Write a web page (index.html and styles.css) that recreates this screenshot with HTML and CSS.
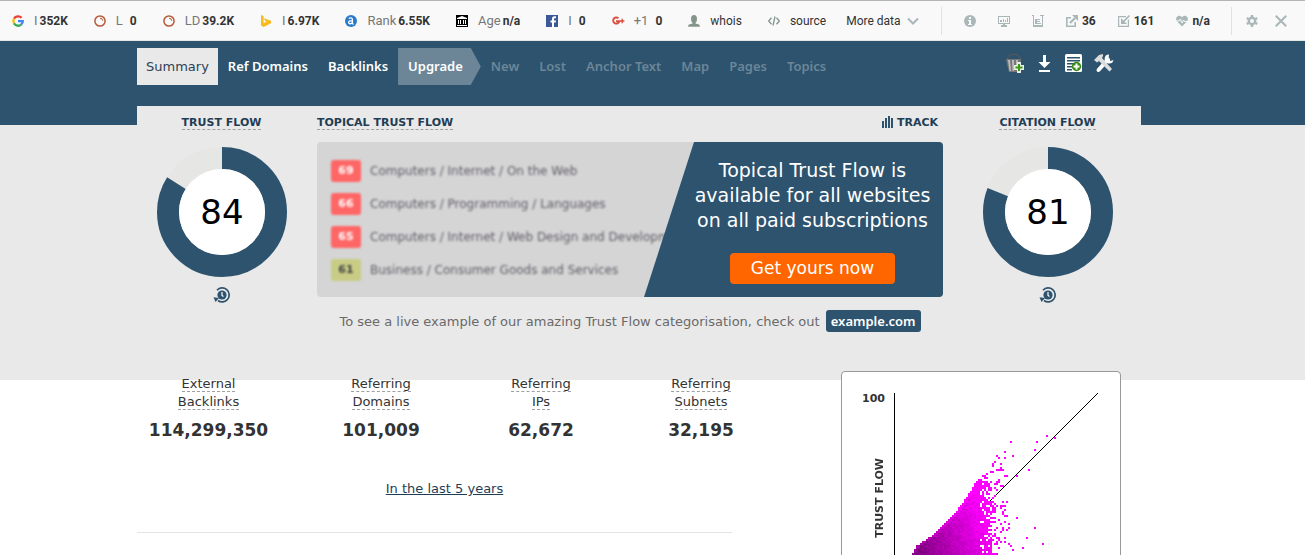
FILE: index.html
```
<!DOCTYPE html>
<html lang="en">
<head>
    <meta charset="UTF-8">
    <meta name="viewport" content="width=device-width, initial-scale=1.0">
    <title>Site Explorer</title>
    <link rel="stylesheet" href="styles.css">
</head>
<body>
    <div class="toolbar">
        <a class="tool" href="#">
            <svg class="ico" viewBox="0 0 12 12" fill="none" stroke-width="2.3"><path d="M9.6 2.8A4.8 4.8 0 0 0 2 3.6" stroke="#ea4335"/><path d="M2 3.6a4.8 4.8 0 0 0 0 4.8" stroke="#fbbc05"/><path d="M2 8.4a4.8 4.8 0 0 0 7.2 1.2" stroke="#34a853"/><path d="M9.2 9.6a4.8 4.8 0 0 0 1.6-3.5H6" stroke="#4285f4"/></svg>
            <span class="label">I</span><b>352K</b>
        </a>
        <a class="tool zero" href="#">
            <svg class="ico" viewBox="0 0 12 12" fill="none" stroke="#b85a3a"><circle cx="6" cy="6" r="5.1" stroke-width="1.5"/><path d="M6 3.2a2.8 2.8 0 0 1 2.8 2.6" stroke-width="1"/></svg>
            <span class="label">L</span><b>0</b>
        </a>
        <a class="tool" href="#">
            <svg class="ico" viewBox="0 0 12 12" fill="none" stroke="#b85a3a"><circle cx="6" cy="6" r="5.1" stroke-width="1.5"/><path d="M6 3.2a2.8 2.8 0 0 1 2.8 2.6" stroke-width="1"/></svg>
            <span class="label">LD</span><b>39.2K</b>
        </a>
        <a class="tool" href="#">
            <svg class="ico" viewBox="0 0 12 12" fill="#f9ba1c"><path d="M1 0l2.6 1v7.3l3-1.8-1.6-.8-1-2.4 7 2.4v2.6L3.600 12 1 10.500z"/></svg>
            <span class="label">I</span><b>6.97K</b>
        </a>
        <a class="tool" href="#">
            <svg class="ico" viewBox="0 0 12 12"><circle cx="6" cy="6" r="6" fill="#2b7ac9"/><path d="M3.800 3.600C5 2.500 7.400 2.400 7.400 4.400v3.800c0 .8.500.9 1.200.7M7.400 5.600C5.200 5.500 3.500 6 3.600 7.500c.2 1.800 3 1.600 3.800-.1" fill="none" stroke="#fff" stroke-width="1.300"/></svg>
            <span class="label">Rank</span><b>6.55K</b>
        </a>
        <a class="tool" href="#">
            <svg class="ico" viewBox="0 0 12 12"><path fill="#000" d="M0 0h12v12H0z"/><path fill="#fff" d="M1 3l5-2 5 2v1H1zM2 5h1v4H2zM4 5h1v4H4zM7 5h1v4H7zM9 5h1v4H9zM1 10h10v1H1z"/></svg>
            <span class="label">Age</span><b>n/a</b>
        </a>
        <a class="tool zero" href="#">
            <svg class="ico" viewBox="0 0 12 12"><path fill="#3b5998" d="M0 0h12v12H0z"/><path fill="#fff" d="M6 12V7.500H4.500v-2H6V4c0-2 1.200-2.700 2.500-2.700H10v1.900H9c-.8 0-1 .3-1 .9v1.400h2l-.3 2H8V12z"/></svg>
            <span class="label">I</span><b>0</b>
        </a>
        <a class="tool zero" href="#">
            <svg class="ico" viewBox="0 0 12 12" fill="none" stroke="#dc4e41"><path d="M6.400 3.300a3.100 3.100 0 1 0 .9 2.900H4" stroke-width="1.900"/><path d="M10.200 3.800v4.400M8 6h4.400" stroke-width="1.400"/></svg>
            <span class="label">+1</span><b>0</b>
        </a>
        <a class="tool" href="#">
            <svg class="ico" viewBox="0 0 12 12" fill="#84958c"><ellipse cx="6" cy="4" rx="3" ry="3.900"/><path d="M4.500 6h3v2.500l3.500 1c.6.3.8 1 .8 2.200H.2c0-1.200.2-1.900.8-2.200l3.500-1z"/></svg>
            <span>whois</span>
        </a>
        <a class="tool" href="#">
            <svg class="ico" viewBox="0 0 12 12" fill="none" stroke="#84958c" stroke-width="1.300"><path d="M3.500 2.800L.7 6l2.800 3.200M8.500 2.800L11.300 6 8.500 9.200M7 1.500L5 10.500"/></svg>
            <span>source</span>
        </a>
        <button class="more" type="button">More data
            <svg class="ico" viewBox="0 0 12 12" fill="none" stroke="#a9b7b8" stroke-width="2"><path d="M1 3.500l5 5 5-5"/></svg>
        </button>
        <div class="page-tools">
            <button type="button" aria-label="Info"><svg class="ico" viewBox="0 0 12 12"><circle cx="6" cy="6" r="6" fill="#a9b7b8"/><path fill="#f9f9f9" d="M5 2h2v2H5zM4 5h3v4h1v1H4V9h1V6H4z"/></svg></button>
            <button type="button" aria-label="Diagnosis"><svg class="ico" viewBox="0 0 12 12" fill="#a9b7b8"><path d="M0 1h12v8H0zM1 2v6h10V2z" fill-rule="evenodd"/><path d="M2 5h2v2H2zM5 4h1v3H5zM7 5h1v2H7zM9 3h1v4H9zM5 9h2v1h2v2H3v-2h2z"/></svg></button>
            <button type="button" aria-label="Density"><svg class="ico" viewBox="0 0 12 12" fill="#a9b7b8"><path d="M0 0h2v10h8V1H8V0h4v1h-1v11H1V1H0z"/><path d="M3 4h5v1H5v1h3v1H5v1h4v1H3z"/></svg></button>
            <a class="links" href="#"><svg class="ico" viewBox="0 0 12 12" fill="none" stroke="#a9b7b8" stroke-width="1.600"><path d="M5 2.800H.8v8.400h8.400V7"/><path d="M4 8l5-5" stroke-width="2"/><path d="M6 0h6v6z" fill="#a9b7b8" stroke="none"/></svg><b>36</b></a>
            <a class="links" href="#"><svg class="ico" viewBox="0 0 12 12" fill="none" stroke="#a9b7b8" stroke-width="1.200"><path d="M8 1.600H.6v9.800h9.800V4.500"/><path d="M11.500.5L5 7" stroke-width="1.700"/><path d="M3 3v6h6z" fill="#a9b7b8" stroke="none"/></svg><b>161</b></a>
            <a class="links" href="#"><svg class="ico" viewBox="0 0 12 12"><path fill="#a9b7b8" d="M6 11.500L.8 6.300C-1 3.500 1 .8 3.200.8 4.600.8 5.500 1.500 6 2.500 6.500 1.500 7.400.8 8.800.8 11 .8 13 3.500 11.200 6.300z"/><path d="M0 6h3l1.200-2L6 8l1.500-3 1 1.500H12" fill="none" stroke="#f9f9f9" stroke-width="1"/></svg><b>n/a</b></a>
        </div>
        <div class="window-tools">
            <button type="button" aria-label="Settings"><svg class="ico" viewBox="0 0 12 12" fill="none" stroke="#a9b7b8"><circle cx="6" cy="6" r="3.200" stroke-width="2.400"/><path d="M6 0v2M6 10v2M.8 3l1.700 1M9.500 8l1.700 1M.8 9l1.700-1M9.500 4l1.700-1" stroke-width="2.400"/></svg></button>
            <button type="button" aria-label="Close"><svg class="ico" viewBox="0 0 12 12" fill="none" stroke="#a9b7b8" stroke-width="2"><path d="M.8.8l10.400 10.400M11.200.8L.8 11.200"/></svg></button>
        </div>
    </div>

    <header class="header">
        <div class="container header-row">
            <nav class="tabs">
                <a class="current" href="#">Summary</a>
                <a href="#">Ref Domains</a>
                <a href="#">Backlinks</a>
                <a class="upgrade" href="#">Upgrade</a>
                <a class="locked" href="#">New</a>
                <a class="locked" href="#">Lost</a>
                <a class="locked" href="#">Anchor Text</a>
                <a class="locked" href="#">Map</a>
                <a class="locked" href="#">Pages</a>
                <a class="locked" href="#">Topics</a>
            </nav>
            <div class="actions">
                <button type="button" aria-label="Add to bucket">
                    <svg viewBox="0 0 20 20"><path d="M3 7C4-.5 16-.5 17 7" fill="none" stroke="#54585c" stroke-width="1.200"/><path fill="#777" d="M2 6h15l-2 13H5z"/><path fill="#bbb" d="M4 7h2l1 11H5.500zM8 7h2v11H8.500zM12 7h2l-1 8h-1z"/><path fill="#e8eee4" d="M10 12h3V9h4v3h3v5h-3v3h-4v-3h-3z"/><path fill="#3b9a14" d="M11.500 13.500H14V11h2v2.500h2.500v2H16V18h-2v-2.500h-2.500z"/></svg>
                </button>
                <button type="button" aria-label="Download">
                    <svg viewBox="0 0 20 20" fill="#fff"><path d="M9 2h3v7h4.500l-6 6-6-6H9zM5 17h11v2H5z"/></svg>
                </button>
                <button type="button" aria-label="Create report">
                    <svg viewBox="0 0 20 20"><rect x="1" y="1" width="17" height="18" rx="1.500" fill="#fff"/><path fill="#2d536e" d="M3 4h13v1.500H3zM3 7h13v1.500H3zM3 10h8v1.500H3zM3 13h5v1.500H3zM3 16h5v1.500H3z"/><circle cx="12.500" cy="13.500" r="4.700" fill="#3b8a14"/><path fill="#fff" d="M9.500 12.500h2v-2h2v2h2v2h-2v2h-2v-2h-2z"/></svg>
                </button>
                <button type="button" aria-label="Tools">
                    <svg viewBox="0 0 20 20"><path d="M15 1.500a4.500 4.500 0 1 0 4.500 5.500l-3 1-2-2z" fill="#fff"/><path d="M14 6.500L4.500 17" stroke="#fff" stroke-width="4" stroke-linecap="round"/><path fill="#ddd" d="M0 7l5-5 4-1v2L8 5l10 11-2.500 2.500L5 8 3 9.500z"/></svg>
                </button>
            </div>
        </div>
    </header>

    <section class="flow">
        <div class="container flow-grid">
            <div class="metric">
                <h2><a href="#">TRUST FLOW</a></h2>
                <svg class="ring" viewBox="0 0 130 130"><circle class="track-bg" cx="65" cy="65" r="54"/><circle class="track-on" cx="65" cy="65" r="54" pathLength="100" stroke-dasharray="84 100"/><circle cx="65" cy="65" r="43" fill="#fff"/><text x="65" y="77">84</text></svg>
                <button class="history" type="button" aria-label="Trust Flow history"><svg viewBox="0 0 16 16"><path d="M3 3.200a7 7 0 1 1 1 10.300" fill="none" stroke="#2d536e" stroke-width="1.700"/><circle cx="8" cy="8" r="4.600" fill="#2d536e"/><path d="M8 5v3.500l1.500 1" fill="none" stroke="#fff" stroke-width="1.200"/><path d="M-.5 10.200l5.500.8-3.500 4z" fill="#2d536e"/></svg></button>
            </div>

            <div class="topical">
                <div class="topical-head">
                    <h2><a href="#">TOPICAL TRUST FLOW</a></h2>
                    <button class="track" type="button"><svg viewBox="0 0 11 12" fill="#2d536e"><path d="M0 5h2v7H0zM3 2h2v10H3zM6 0h2v12H6zM9 2h2v10H9z"/></svg>TRACK</button>
                </div>
                <div class="promo">
                    <ul class="topics">
                        <li><b>69</b>Computers / Internet / On the Web</li>
                        <li><b>66</b>Computers / Programming / Languages</li>
                        <li><b>65</b>Computers / Internet / Web Design and Development</li>
                        <li><b class="green">61</b>Business / Consumer Goods and Services</li>
                    </ul>
                    <div class="offer">
                        <p>Topical Trust Flow is<br>available for all websites<br>on all paid subscriptions</p>
                        <a class="get" href="#">Get yours now</a>
                    </div>
                </div>
                <p class="live">To see a live example of our amazing Trust Flow categorisation, check out <a href="#">example.com</a></p>
            </div>

            <div class="metric">
                <h2><a href="#">CITATION FLOW</a></h2>
                <svg class="ring" viewBox="0 0 130 130"><circle class="track-bg" cx="65" cy="65" r="54"/><circle class="track-on" cx="65" cy="65" r="54" pathLength="100" stroke-dasharray="81 100"/><circle cx="65" cy="65" r="43" fill="#fff"/><text x="65" y="77">81</text></svg>
                <button class="history" type="button" aria-label="Citation Flow history"><svg viewBox="0 0 16 16"><path d="M3 3.200a7 7 0 1 1 1 10.300" fill="none" stroke="#2d536e" stroke-width="1.700"/><circle cx="8" cy="8" r="4.600" fill="#2d536e"/><path d="M8 5v3.500l1.500 1" fill="none" stroke="#fff" stroke-width="1.200"/><path d="M-.5 10.200l5.500.8-3.500 4z" fill="#2d536e"/></svg></button>
            </div>
        </div>
    </section>

    <main class="container main">
        <div class="totals">
            <dl class="stats">
                <div><dt><a href="#">External<br>Backlinks</a></dt><dd>114,299,350</dd></div>
                <div><dt><a href="#">Referring<br>Domains</a></dt><dd>101,009</dd></div>
                <div><dt><a href="#">Referring<br>IPs</a></dt><dd>62,672</dd></div>
                <div><dt><a href="#">Referring<br>Subnets</a></dt><dd>32,195</dd></div>
            </dl>
            <a class="years" href="#">In the last 5 years</a>
        </div>
        <div class="chart">
            <span class="max">100</span>
            <span class="axis">TRUST FLOW</span>
            <canvas id="plot" width="206" height="206"></canvas>
        </div>
    </main>
<script src="script.js"></script>
</body>
</html>
```
FILE: styles.css
```
html,
body {
    height: 100%;
    margin: 0;
    padding: 0;
}

body {
    overflow: hidden;
    background: #fff;
    color: #333;
    font: 13px/18px Verdana, 'DejaVu Sans', sans-serif;
}

a {
    color: inherit;
    text-decoration: none;
}

button {
    border: 0;
    padding: 0;
    background: transparent;
    color: inherit;
    font: inherit;
    cursor: pointer;
}

svg {
    display: block;
    flex: none;
    overflow: visible;
}

h2,
p,
ul,
dl,
dd {
    margin: 0;
    padding: 0;
}

.container {
    max-width: 1004px;
    margin: 0 auto;
}

/* toolbar */
.toolbar {
    display: flex;
    align-items: center;
    box-sizing: border-box;
    height: 41px;
    padding: 0 18px 0 12px;
    border-top: 1px solid #b4b4b4;
    border-bottom: 1px solid #e4e8e4;
    background: #f9f9f9;
    font: 12px/16px Roboto, sans-serif;
    white-space: nowrap;
}

.ico {
    width: 12px;
    height: 12px;
}

.tool {
    display: flex;
    align-items: center;
    margin-right: 26px;
}

.tool .ico {
    margin-right: 10px;
}

.tool .label {
    margin-right: 2px;
    color: #777;
    font-size: 13px;
}

.tool.zero .label {
    margin-right: 7px;
}

.more {
    display: flex;
    align-items: center;
    gap: 6px;
    margin-left: -6px;
}

.page-tools,
.window-tools {
    display: flex;
    align-items: center;
    height: 28px;
    border-left: 1px solid #dfe3e3;
}

.page-tools {
    gap: 22px;
    margin-left: auto;
    padding: 0 21px 0 22px;
}

.links {
    display: flex;
    align-items: center;
    gap: 4px;
}

.window-tools {
    gap: 17px;
    padding-left: 14px;
}

/* header */
.header {
    padding: 7px 27px 40px 0;
    background: #2d536e;
}

.header-row {
    display: flex;
    justify-content: space-between;
}

.tabs {
    display: flex;
    color: #fff;
    font: 600 13px/37px 'Noto Sans', sans-serif;
}

.tabs a {
    padding: 0 10px;
}

.tabs .current {
    background: #e9e9e9;
    color: #2d4254;
    font: 13px/37px Verdana, 'DejaVu Sans', sans-serif;
    padding: 0 9px;
}

.tabs .upgrade {
    padding: 0 18px 0 10px;
    background: #6c8698;
    clip-path: polygon(0 0, calc(100% - 10px) 0, 100% 50%, calc(100% - 10px) 100%, 0 100%);
}

.tabs .locked {
    color: #6c8698;
}

.actions {
    display: flex;
    gap: 10px;
    margin: 5px 27px 0 0;
}

.actions svg {
    width: 20px;
    height: 20px;
}

.actions button {
    align-self: flex-start;
}

/* flow metrics */
.flow {
    padding-right: 27px;
    background: #e9e9e9;
}

.flow-grid {
    position: relative;
    top: -19px;
    display: grid;
    grid-template-columns: 169px 1fr 187px;
    column-gap: 11px;
    box-sizing: border-box;
    height: 255px;
    padding-top: 10px;
    background: #e9e9e9;
}

h2,
.track {
    color: #1f3d55;
    font-size: 11px;
    font-weight: bold;
    line-height: 13px;
}

h2 a {
    border-bottom: 1px dashed #a0a0a0;
}

.metric {
    display: flex;
    flex-direction: column;
    align-items: center;
}

.ring {
    width: 130px;
    height: 130px;
    margin: 18px 0 10px;
}

.ring text {
    fill: #000;
    font-size: 34px;
    text-anchor: middle;
}

.track-bg,
.track-on {
    fill: none;
    stroke: #e6e6e4;
    stroke-width: 22;
}

.track-on {
    stroke: #2d536e;
    transform: rotate(-90deg);
    transform-origin: center;
}

.history svg {
    width: 16px;
    height: 16px;
}

.topical-head {
    display: flex;
    justify-content: space-between;
    padding-right: 5px;
}

.track {
    display: flex;
    gap: 4px;
}

.track svg {
    width: 11px;
    height: 12px;
}

.promo {
    display: flex;
    justify-content: space-between;
    box-sizing: border-box;
    height: 155px;
    margin-top: 13px;
    border-radius: 4px;
    overflow: hidden;
    background: #d5d5d5;
}

.topics {
    display: flex;
    flex: 1;
    flex-direction: column;
    gap: 11px;
    min-width: 0;
    margin-right: -50px;
    padding: 18px 0 0 14px;
    color: #605c66;
    font-size: 12px;
    list-style: none;
    white-space: nowrap;
    filter: blur(1px);
}

.topics li {
    display: flex;
    align-items: center;
    gap: 9px;
}

.topics b {
    width: 30px;
    border-radius: 3px;
    background: #ff6666;
    color: #fff;
    font-size: 11px;
    line-height: 22px;
    text-align: center;
}

.topics .green {
    background: #c8cc84;
    color: #444;
}

.offer {
    position: relative;
    display: flex;
    flex-direction: column;
    align-items: center;
    box-sizing: border-box;
    width: 299px;
    padding: 16px 0 0 38px;
    background: #2d536e;
    clip-path: polygon(50px 0, 100% 0, 100% 100%, 0 100%);
    color: #fff;
    font-size: 19px;
    line-height: 25px;
    text-align: center;
    white-space: nowrap;
}

.get {
    margin-top: 20px;
    padding: 0 21px;
    border-radius: 4px;
    background: #ff6600;
    font-size: 17px;
    line-height: 31px;
}

.live {
    margin-top: 13px;
    color: #6a6a6a;
    text-align: center;
    line-height: 22px;
    white-space: nowrap;
}

.live a {
    display: inline-block;
    margin-left: 2px;
    padding: 0 5px;
    border-radius: 3px;
    background: #2d536e;
    color: #fff;
    font: 600 13px/22px 'Noto Sans', sans-serif;
}

/* totals and chart */
.main {
    position: relative;
    display: flex;
    justify-content: space-between;
    padding-right: 27px;
    margin-top: -9px;
}

.totals {
    display: flex;
    flex-direction: column;
    align-items: flex-start;
    width: 595px;
    height: 157px;
    padding-top: 4px;
    border-bottom: 1px solid #e4e4e4;
}

.stats {
    display: grid;
    grid-template-columns: 143px repeat(3, 160px);
    text-align: center;
}

.stats div:first-child {
    margin-right: 0;
}

.stats div + div {
    margin: 0 -21px 0 21px;
}

.stats a {
    border-bottom: 1px dashed #a0a0a0;
}

.stats dd {
    margin-top: 8px;
    font-size: 17px;
    font-weight: bold;
    line-height: 22px;
}

.years {
    align-self: center;
    margin-top: 39px;
    padding-left: 20px;
    color: #1f3d55;
    text-decoration: underline;
}

.chart {
    display: grid;
    grid-template-columns: 43px auto;
    grid-template-rows: 16px 1fr;
    column-gap: 9px;
    box-sizing: border-box;
    width: 280px;
    margin-right: 20px;
    padding: 21px 0 30px;
    border: 1px solid #999;
    border-radius: 4px;
    background: #fff;
    font-size: 11px;
    font-weight: bold;
    line-height: 11px;
}

.max {
    text-align: right;
}

.axis {
    justify-self: end;
    margin-top: 49px;
    writing-mode: vertical-rl;
    transform: rotate(180deg);
    align-self: start;
}

#plot {
    grid-column: 2;
    grid-row: 1 / 3;
    width: 206px;
    height: 206px;
}
```
FILE: script.js
```
var ctx = document.getElementById('plot').getContext('2d');
var cell = 2;
var seed = 7;

// repeatable random, so the plot looks the same on every load
function rnd() {
    seed = (seed * 16807) % 2147483647;
    return seed / 2147483647;
}

function dot(x, y, color) {
    ctx.fillStyle = color;
    ctx.fillRect(x * cell, y * cell, cell, cell);
}

// axis and diagonal
ctx.fillStyle = '#000';
ctx.fillRect(0, 0, 1, 206);
for (var i = 0; i < 204; i++) {
    ctx.fillRect(203 - i, i, 1, 1);
}

// left edge of the cloud, row by row
var edge = [[44, 41], [52, 36], [60, 30], [71, 19], [76, 11], [81, 9], [102, 0]];
function left(y) {
    for (var i = 1; i < edge.length; i++) {
        if (y <= edge[i][0]) {
            var a = edge[i - 1], b = edge[i];
            return Math.round(a[1] + (b[1] - a[1]) * (y - a[0]) / (b[0] - a[0]));
        }
    }
}

for (var y = 44; y < 102; y++) {
    for (var x = left(y); x < 57; x++) {
        var fill = x < 43 ? 1 : x < 49 ? 0.85 - (x - 43) * 0.03 : 0.45 - (x - 49) * 0.06;
        if (y < 54 && x > 46) {
            fill -= 0.25;
        }
        if (rnd() < fill) {
            var c = 125 + (x - 10) * 3.2 + (76 - y) * 1.2 + (rnd() - 0.5) * 24;
            if (x - left(y) < 2) {
                c += 30;
            }
            c = Math.max(110, Math.min(255, Math.round(c)));
            dot(x, y, 'rgb(' + c + ',0,' + c + ')');
        }
    }
}

// single sites away from the cloud
[
    [58, 24], [71, 24], [76, 21], [80, 22], [70, 28], [55, 29], [59, 31], [51, 31], [52, 32], [55, 32],
    [50, 34], [49, 35], [49, 36], [53, 35], [67, 38], [51, 38], [52, 38], [53, 37], [53, 38], [54, 38],
    [55, 41], [56, 41], [61, 41], [44, 41], [45, 41], [46, 40], [46, 42], [45, 42], [48, 39], [49, 39],
    [52, 44], [54, 46], [53, 46], [50, 45], [52, 43], [42, 43], [43, 43], [41, 44], [53, 56], [55, 56],
    [55, 58], [61, 62], [70, 67], [57, 65], [57, 67], [66, 72], [74, 75], [64, 77], [59, 78], [57, 75],
    [58, 76], [55, 74], [61, 81], [65, 81]
].forEach(function (p) {
    dot(p[0], p[1], '#ff00ff');
});
```
